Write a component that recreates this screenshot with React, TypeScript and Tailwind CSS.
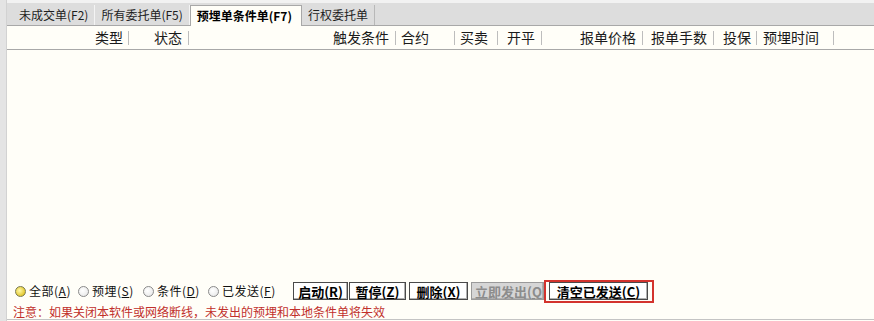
import React from "react";

const font = { fontFamily: '"Noto Sans CJK SC", "Noto Sans", sans-serif' };

type Col = { w: number; text: string; align: "left" | "right"; pad: number };

const cols: Col[] = [
  { w: 121, text: "类型", align: "right", pad: 5 },
  { w: 59, text: "状态", align: "right", pad: 6 },
  { w: 206, text: "触发条件", align: "right", pad: 6 },
  { w: 58, text: "合约", align: "left", pad: 5 },
  { w: 42, text: "买卖", align: "left", pad: 5 },
  { w: 43, text: "开平", align: "left", pad: 9 },
  { w: 100, text: "报单价格", align: "right", pad: 6 },
  { w: 70, text: "报单手数", align: "left", pad: 8 },
  { w: 42, text: "投保", align: "left", pad: 9 },
  { w: 76, text: "预埋时间", align: "left", pad: 6 },
];

function Radio({ checked, label, k, w }: { checked?: boolean; label: string; k: string; w: string }) {
  return (
    <div className={"flex items-center gap-[3px] " + w}>
      <span
        className={
          checked
            ? "w-[11px] h-[11px] rounded-full border border-[#7a7a50] bg-[radial-gradient(circle_at_40%_40%,#fff9a8,#d8b400)]"
            : "w-[11px] h-[11px] rounded-full border border-[#8a8a8a] bg-[radial-gradient(circle_at_40%_40%,#ffffff,#e4e4e4)]"
        }
      />
      <span className="text-[12px] leading-none text-[#111] tracking-[0.5px] whitespace-nowrap">
        {label}(<span className="underline">{k}</span>)
      </span>
    </div>
  );
}

function Btn({ label, k, w, disabled, ml }: { label: string; k: string; w: string; disabled?: boolean; ml?: string }) {
  return (
    <div
      className={
        (disabled
          ? "bg-[#d6d6d6] text-[#8c8c8c] border-[#9a9a9a] "
          : "bg-white text-black border-[#4a4a4a] ") +
        "h-[18px] border flex items-center justify-center overflow-hidden whitespace-nowrap text-[13px] font-bold leading-none shadow-[inset_-1px_-1px_0_#b0b0b0] " +
        w +
        " " +
        (ml ?? "")
      }
    >
      {label}(<span className="underline">{k}</span>)
    </div>
  );
}

export default function App() {
  return (
    <div className="w-[874px] h-[321px] flex bg-[#fffef8] overflow-hidden" style={font}>
      <div className="w-[7px] h-full bg-[#e4e4e4] border-r border-[#d2d2d2]" />
      <div className="flex-1 flex flex-col min-w-0">
        <div className="h-[3px] bg-[#f2f2f2]" />
        <div className="h-[23px] bg-[#dddddd] border-b border-[#a8a8a8] flex items-end pl-[4px] text-[12px] text-[#1e1e1e]">
          <div className="h-[20px] flex items-center pl-[8px] pr-[6px] border-r border-[#f4f4f4]">未成交单(F2)</div>
          <div className="h-[20px] flex items-center px-[6px] border-r border-[#f4f4f4]">所有委托单(F5)</div>
          <div className="h-[21px] mb-[-1px] flex items-center pl-[6px] pr-[9px] bg-[#fffef8] border-x border-t border-[#a8a8a8] font-bold text-black">
            预埋单条件单(F7)
          </div>
          <div className="h-[20px] flex items-center px-[6px] border-r border-[#b8b8b8]">行权委托单</div>
        </div>
        <div className="h-[24px] border-b border-[#a8a8a8] flex items-center text-[14px] text-[#1a1a1a]">
          {cols.map((c, i) => (
            <React.Fragment key={i}>
              <div
                className={
                  "h-full flex items-center whitespace-nowrap " +
                  (c.align === "right" ? "justify-end" : "justify-start")
                }
                style={{
                  width: c.w,
                  paddingRight: c.align === "right" ? c.pad : 0,
                  paddingLeft: c.align === "left" ? c.pad : 0,
                }}
              >
                {c.text}
              </div>
              <div className="w-px h-[14px] bg-[#bdbdbd]" />
            </React.Fragment>
          ))}
        </div>
        <div className="flex-1" />
        <div className="h-[18px] flex items-center pl-[8px]">
          <div className="flex items-center">
            <Radio checked label="全部" k="A" w="w-[63px]" />
            <Radio label="预埋" k="S" w="w-[65px]" />
            <Radio label="条件" k="D" w="w-[65px]" />
            <Radio label="已发送" k="F" w="w-[85px]" />
          </div>
          <div className="flex items-center">
            <Btn label="启动" k="R" w="w-[55px]" />
            <Btn label="暂停" k="Z" w="w-[57px]" ml="ml-[1px]" />
            <Btn label="删除" k="X" w="w-[59px]" ml="ml-[3px]" />
            <Btn label="立即发出" k="Q" w="w-[73px] justify-start pl-[3px]" disabled ml="ml-[3px]" />
            <div className="h-[23px] w-[110px] border-2 border-[#d3332d] flex items-center pl-[3px]">
              <Btn label="清空已发送" k="C" w="w-[99px]" />
            </div>
          </div>
        </div>
        <div className="mt-[5px] h-[14px] leading-[14px] pl-[6px] text-[12px] text-[#c1302b] whitespace-nowrap">
          注意：如果关闭本软件或网络断线，未发出的预埋和本地条件单将失效
        </div>
        <div className="h-px bg-[#c4c4c4]" />
        <div className="h-px" />
      </div>
    </div>
  );
}
